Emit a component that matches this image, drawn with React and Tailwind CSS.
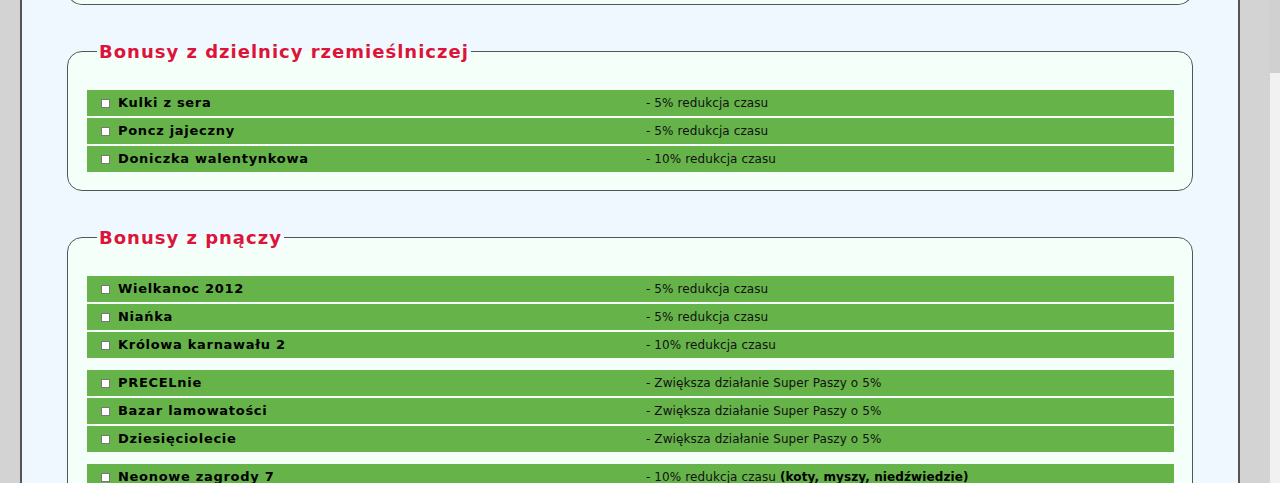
import React from 'react';

const font = { fontFamily: '"DejaVu Sans", Verdana, sans-serif' };

const craftBonuses = [
  [
    { name: 'Kulki z sera', desc: '- 5% redukcja czasu' },
    { name: 'Poncz jajeczny', desc: '- 5% redukcja czasu' },
    { name: 'Doniczka walentynkowa', desc: '- 10% redukcja czasu' },
  ],
];

const vineBonuses = [
  [
    { name: 'Wielkanoc 2012', desc: '- 5% redukcja czasu' },
    { name: 'Niańka', desc: '- 5% redukcja czasu' },
    { name: 'Królowa karnawału 2', desc: '- 10% redukcja czasu' },
  ],
  [
    { name: 'PRECELnie', desc: '- Zwiększa działanie Super Paszy o 5%' },
    { name: 'Bazar lamowatości', desc: '- Zwiększa działanie Super Paszy o 5%' },
    { name: 'Dziesięciolecie', desc: '- Zwiększa działanie Super Paszy o 5%' },
  ],
  [
    {
      name: 'Neonowe zagrody 7',
      desc: '- 10% redukcja czasu ',
      extra: '(koty, myszy, niedźwiedzie)',
    },
    { name: 'Neonowe zagrody 8', desc: '- 10% redukcja czasu' },
  ],
];

const BonusRow = ({ item }) => (
  <div className="flex items-center h-[26px] bg-[#66b34a] text-black">
    <div className="flex items-center w-[559px] pl-[14px]">
      <span className="w-[9px] h-[9px] bg-white border border-[#777] shrink-0" />
      <span className="ml-[8px] text-[13px] font-bold tracking-[0.7px]">{item.name}</span>
    </div>
    <div className="text-[12px] tracking-[0.1px] text-[#111]">
      {item.desc}
      {item.extra && <b className="text-[12px] tracking-[0.1px] text-black">{item.extra}</b>}
    </div>
  </div>
);

const BonusSet = ({ title, groups }) => (
  <fieldset className="mx-[45px] mt-[36px] border border-[#555] rounded-[15px] bg-[#f5fffa] pl-[19px] pr-[18px] pt-[28px] pb-[18px]">
    <legend className="ml-[10px] px-[2px] text-[18px] font-bold tracking-[1px] text-[#dc143c] leading-[21px]">
      {title}
    </legend>
    <div className="flex flex-col gap-[12px]">
      {groups.map((group, i) => (
        <div key={i} className="flex flex-col gap-[2px]">
          {group.map((item) => (
            <BonusRow key={item.name} item={item} />
          ))}
        </div>
      ))}
    </div>
  </fieldset>
);

export default function App() {
  return (
    <div className="flex h-screen overflow-hidden bg-[#d3d3d3]" style={font}>
      <div className="flex-1 overflow-hidden">
        <div className="ml-[20px] w-[1220px] min-h-screen border-x-2 border-[#555] bg-[#f0f8ff]">
          <div className="mx-[45px] -mt-[30px] h-[35px] border border-t-0 border-[#555] rounded-b-[15px] bg-[#f5fffa]" />
          <BonusSet title="Bonusy z dzielnicy rzemieślniczej" groups={craftBonuses} />
          <BonusSet title="Bonusy z pnączy" groups={vineBonuses} />
        </div>
      </div>
      <div className="w-[10px] flex flex-col bg-[#f1f1f1]">
        <div className="h-[73px] bg-[#d0d0d0]" />
      </div>
    </div>
  );
}
